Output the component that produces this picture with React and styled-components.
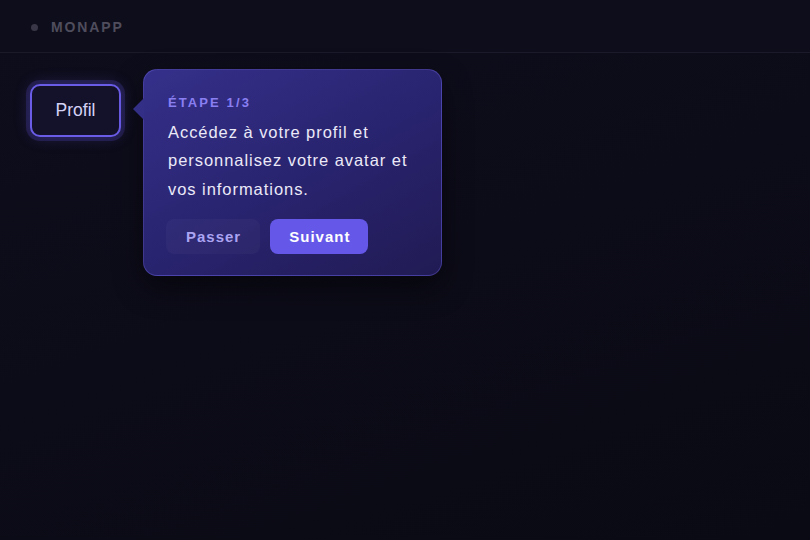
import React from "react";
import styled, { createGlobalStyle } from "styled-components";

const GlobalStyle = createGlobalStyle`
  html, body {
    margin: 0;
    padding: 0;
    background: #0b0b16;
  }
  body {
    font-family: "Liberation Sans", Arial, sans-serif;
    -webkit-font-smoothing: antialiased;
  }
  * {
    box-sizing: border-box;
  }
`;

const Page = styled.div`
  width: 810px;
  height: 540px;
  display: flex;
  flex-direction: column;
  background: linear-gradient(160deg, #0e0d1c 0%, #0a0a14 100%);
  overflow: hidden;
`;

const Header = styled.header`
  height: 53px;
  display: flex;
  align-items: center;
  gap: 13px;
  padding: 2px 0 0 31px;
  border-bottom: 1px solid #1b1a2b;
  background: #0e0d1b;
`;

const Dot = styled.span`
  width: 7px;
  height: 7px;
  border-radius: 50%;
  background: #393747;
`;

const Brand = styled.span`
  font-size: 14px;
  font-weight: 700;
  letter-spacing: 1.9px;
  color: #4f4d5d;
`;

const Content = styled.main`
  flex: 1;
  padding: 31px 30px;
`;

const Anchor = styled.div`
  position: relative;
  display: inline-block;
`;

const ProfileButton = styled.button`
  width: 91px;
  height: 53px;
  border: 2px solid #6a5ce6;
  border-radius: 10px;
  background: #14122a;
  color: #d6d2f6;
  font-family: inherit;
  font-size: 17.5px;
  cursor: pointer;
  box-shadow: 0 0 0 4px rgba(99, 86, 230, 0.2), 0 0 16px rgba(99, 86, 230, 0.25);
`;

const Tooltip = styled.div`
  position: absolute;
  left: calc(100% + 22px);
  top: -15px;
  width: 299px;
  padding: 24px 24px 21px;
  border: 1px solid rgba(120, 108, 240, 0.35);
  border-radius: 14px;
  background: linear-gradient(150deg, #35308a 0%, #28236d 55%, #211b54 100%);
  box-shadow: 0 12px 30px rgba(0, 0, 0, 0.45);

  &::before {
    content: "";
    position: absolute;
    left: -11px;
    top: 28px;
    border-top: 11px solid transparent;
    border-bottom: 11px solid transparent;
    border-right: 11px solid #332e86;
  }
`;

const StepLabel = styled.div`
  font-size: 13px;
  line-height: 17px;
  font-weight: 700;
  letter-spacing: 2.1px;
  color: #8a7ff2;
  margin-bottom: 7px;
`;

const Message = styled.p`
  margin: 0 0 16px;
  font-size: 16.5px;
  line-height: 28.3px;
  letter-spacing: 0.95px;
  color: #ebe9f8;
`;

const Actions = styled.div`
  display: flex;
  gap: 10px;
  margin-left: -2px;
`;

const ActionButton = styled.button`
  height: 35px;
  padding: 0 ${(p) => (p.$primary ? "18px 0 19px" : "19px 0 20px")};
  border: none;
  border-radius: 8px;
  font-family: inherit;
  font-size: 15px;
  font-weight: 700;
  letter-spacing: 1px;
  cursor: pointer;
  background: ${(p) => (p.$primary ? "#6558e8" : "rgba(255, 255, 255, 0.03)")};
  color: ${(p) => (p.$primary ? "#ffffff" : "#aba4f2")};
`;

export default function App() {
  return (
    <>
      <GlobalStyle />
      <Page>
        <Header>
          <Dot />
          <Brand>MONAPP</Brand>
        </Header>
        <Content>
          <Anchor>
            <ProfileButton>Profil</ProfileButton>
            <Tooltip>
              <StepLabel>ÉTAPE 1/3</StepLabel>
              <Message>
                Accédez à votre profil et personnalisez votre avatar et vos informations.
              </Message>
              <Actions>
                <ActionButton>Passer</ActionButton>
                <ActionButton $primary>Suivant</ActionButton>
              </Actions>
            </Tooltip>
          </Anchor>
        </Content>
      </Page>
    </>
  );
}
